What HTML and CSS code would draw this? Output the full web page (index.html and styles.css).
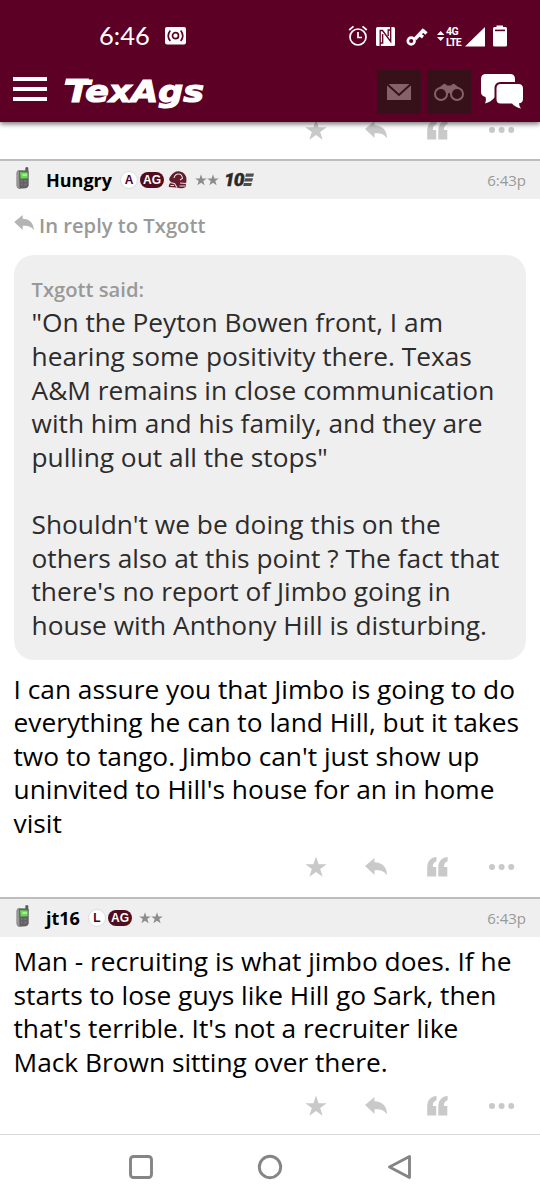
FILE: index.html
```html
<!DOCTYPE html>
<html lang="en">
<head>
<meta charset="utf-8">
<title>TexAgs</title>
<link rel="stylesheet" href="styles.css">
</head>
<body>
<svg class="defs" aria-hidden="true">
  <symbol id="star" viewBox="0 0 22 22"><path d="M11 0.5 13.6 8.2H21.6L15.2 13 17.6 20.7 11 16 4.4 20.7 6.8 13 .4 8.2H8.4Z"/></symbol>
  <symbol id="reply" viewBox="0 0 22 18"><path d="M0 8 9.5 0V4.2C17 4.4 22 9 22 17.2 19 12.8 15.5 12 9.5 12.2V17Z"/></symbol>
  <symbol id="quote" viewBox="0 0 21 20"><path d="M9.5 0V4.3C7.2 4.8 5.9 6.7 5.8 10H9.2V19.5H.2V11C.2 4.4 3.4.5 9.5 0ZM20.6 0V4.3C18.3 4.8 17 6.7 16.9 10H20.3V19.5H11.3V11C11.3 4.4 14.5.5 20.6 0Z"/></symbol>
  <symbol id="more" viewBox="0 0 26 6"><circle cx="3" cy="3" r="3"/><circle cx="12.6" cy="3" r="3"/><circle cx="22.2" cy="3" r="3"/></symbol>
  <symbol id="phone" viewBox="0 0 14 24">
    <path d="M9.3.8Q11-.6 12.3.8V7H9.3Z" fill="#5d5d5d"/>
    <path d="M2.5 3.2 12 3.5Q13 4 12.7 6V18.5Q12.4 20.5 10 21.3L3 21.7Q.7 21.2.6 19V5.5Q.8 3.7 2.5 3.2Z" fill="#626262"/>
    <path d="M.8 6Q1 3.7 3 3.3L3.5 21.5Q1 21 .8 19Z" fill="#969696"/>
    <path d="M4 5.3 11.7 5.5V11.2L4.7 11.5Z" fill="#62df4d"/><path d="M6.5 6.8H11V9H6.5Z" fill="#a3f392"/>
    <path d="M5 13.2H6.5V15H5ZM8.3 13.2H10.5V15H8.3ZM5 16.6H6.5V18.5H5ZM8.3 16.6H10.5V18.5H8.3Z" fill="#777"/>
  </symbol>
</svg>
<header class="top">
  <div class="status">
    <span class="clock">6:46</span>
    <svg class="cast" viewBox="0 0 21 18"><rect width="21" height="17.5" rx="2" fill="#fff"/><g fill="none" stroke="#5c0025" stroke-width="1.7"><circle cx="10.5" cy="8.7" r="3"/><path d="M5.3 3.4Q1.2 8.7 5.3 14M15.7 3.4Q19.8 8.7 15.7 14"/></g></svg>
    <div class="tray">
      <svg width="90" height="24" viewBox="0 0 90 24" fill="#fff">
        <g fill="none" stroke="#fff" stroke-width="1.7"><circle cx="10" cy="13" r="8"/><path d="M10 8V13.5H14M1.2 6 5.5 2.3M18.8 6 14.5 2.3"/></g>
        <rect x="28" y="3" width="19" height="19" rx="1.5"/><path d="M32.2 22V6.500H34.500L42.700 17.500V3M34.700 10V19H32M40.200 12V6H43" fill="none" stroke="#5c0025" stroke-width="1.300"/>
        <path d="M67 15 76 5.5M71.5 10.5 75 13.2M75 6.5 78.5 9.5" fill="none" stroke="#fff" stroke-width="3.4"/><circle cx="63.2" cy="17" r="3.4" fill="none" stroke="#fff" stroke-width="2.6"/>
      </svg>
      <svg class="updown" width="8" height="24" viewBox="0 0 8 24" fill="#fff"><path d="M0 11 3.700 7 7.400 11ZM0 13 3.700 17 7.400 13Z"/></svg>
      <span class="net"><span>4G</span><span>LTE</span></span>
      <svg width="43" height="24" viewBox="117 0 43 24" fill="#fff">
        <path d="M117 22.5H137V3Z"/>
        <path d="M148.500 3V1.500H155V3H157.500Q159 3 159 4.500V21Q159 22.500 157.500 22.500H146.500Q145 22.500 145 21V4.500Q145 3 146.500 3Z"/><path d="M147 6.400H157" stroke="#5c0025" stroke-width="1.600"/>
      </svg>
    </div>
  </div>
  <nav class="bar">
    <div class="burger"><i></i><i></i><i></i></div>
    <svg class="logo" viewBox="0 0 146 38"><text x="2" y="26.500" textLength="138" lengthAdjust="spacingAndGlyphs">TexAgs</text><path d="M2 3.500H25L23.500 10H21.500L20.500 7.500H4.500L2.500 10H0.500Z"/></svg>
    <div class="tile"><svg width="26" height="18" viewBox="0 0 26 18"><path d="M1 1H25V17H1Z" fill="#866168"/><path d="M1 1 13 12 25 1" fill="none" stroke="#371119" stroke-width="2"/></svg></div>
    <div class="tile"><svg width="30" height="20" viewBox="0 0 30 20"><g fill="none" stroke="#866168" stroke-width="2"><circle cx="7" cy="12" r="6"/><circle cx="23" cy="12" r="6"/></g><path d="M2 8 9 2.500Q10.500 1 12 2.500L13 3.500H17L18 2.500Q19.500 1 21 2.500L28 8Q21 3.500 17.500 10L16.500 12Q15 10 13.500 12L12.500 10Q9 3.500 2 8Z" fill="#866168"/></svg></div>
    <svg class="chat" viewBox="0 0 44 36"><path d="M6 1H30Q35 1 35 6V19Q35 24 30 24H15Q11 29 5 30.500Q6.500 27 5.500 24Q1 23 1 19V6Q1 1 6 1Z"/><path d="M20.500 11H38.500Q43 11 43 15.500V26Q43 30 39 30.300Q39 33 41 35.500Q35 34 32 30.500H20.500Q16.500 30.500 16.500 26V15.500Q16.500 11 20.500 11Z" stroke="#5c0025" stroke-width="4" paint-order="stroke"/></svg>
  </nav>
</header>
<main>
  <div class="actions first"><svg class="i-star"><use href="#star"/></svg><svg class="i-reply"><use href="#reply"/></svg><svg class="i-quote"><use href="#quote"/></svg><svg class="i-more"><use href="#more"/></svg></div>
  <article class="post">
    <div class="head">
      <svg class="phone"><use href="#phone"/></svg><b class="user hungry">Hungry</b>
      <span class="letter">A</span><span class="ag">AG</span>
      <svg class="helmet" viewBox="0 0 20 18"><path d="M2 6Q6-.5 12 .5 18.500 2 18.500 9L17.500 16Q15 18 11 17L8 16.500 1 16Q0 14 3 11Q0 9 2 6Z" fill="#641c2c"/><path d="M6 7Q7 3 10.500 3T14.500 7.500L12 9M1.500 11.500 6.500 12.500 9 16.500M12 12 18 12.500M2.500 14.500H6M11.500 15H17" fill="none" stroke="#e7dcdf" stroke-width="1.100"/></svg>
      <span class="stars"><svg><use href="#star"/></svg><svg><use href="#star"/></svg></span>
      <span class="ten">10</span><svg class="lines" viewBox="0 0 11 14"><path d="M3 0.500H11L10.200 3.700H2.200ZM2 5.200H10L9.200 8.400H1.200ZM.9 9.900H8.900L8.100 13.100H.1Z"/></svg>
      <time>6:43p</time>
    </div>
    <div class="inreply"><svg><use href="#reply"/></svg><span>In reply to Txgott</span></div>
    <blockquote>
      <div class="said">Txgott said:</div>
      <p>"On the Peyton Bowen front, I am<br>hearing some positivity there. Texas<br>A&amp;M remains in close communication<br>with him and his family, and they are<br>pulling out all the stops"<br><br>Shouldn't we be doing this on the<br>others also at this point ? The fact that<br>there's no report of Jimbo going in<br>house with Anthony Hill is disturbing.</p>
    </blockquote>
    <p class="text">I can assure you that Jimbo is going to do<br>everything he can to land Hill, but it takes<br>two to tango. Jimbo can't just show up<br>uninvited to Hill's house for an in home<br>visit</p>
    <div class="actions second"><svg class="i-star"><use href="#star"/></svg><svg class="i-reply"><use href="#reply"/></svg><svg class="i-quote"><use href="#quote"/></svg><svg class="i-more"><use href="#more"/></svg></div>
  </article>
  <article class="post">
    <div class="head">
      <svg class="phone"><use href="#phone"/></svg><b class="user jt">jt16</b>
      <span class="letter">L</span><span class="ag">AG</span>
      <span class="stars"><svg><use href="#star"/></svg><svg><use href="#star"/></svg></span>
      <time>6:43p</time>
    </div>
    <p class="text later">Man - recruiting is what jimbo does. If he<br>starts to lose guys like Hill go Sark, then<br>that's terrible. It's not a recruiter like<br>Mack Brown sitting over there.</p>
    <div class="actions third"><svg class="i-star"><use href="#star"/></svg><svg class="i-reply"><use href="#reply"/></svg><svg class="i-quote"><use href="#quote"/></svg><svg class="i-more"><use href="#more"/></svg></div>
  </article>
</main>
<footer>
  <svg viewBox="0 0 26 26"><rect x="2.500" y="2.500" width="21" height="21" rx="3"/></svg>
  <svg viewBox="0 0 26 26"><circle cx="13" cy="13" r="10.700"/></svg>
  <svg viewBox="0 0 26 26"><path d="M3.500 13 23.500 2.500V23.500Z"/></svg>
</footer>
</body>
</html>
```
FILE: styles.css
```css
* { box-sizing: border-box; }
body { margin: 0; width: 540px; height: 1200px; overflow: hidden; background: #fff; font-family: "Open Sans", sans-serif; display: flex; flex-direction: column; }
p, blockquote { margin: 0; }
svg { display: block; flex: none; }
.defs { position: absolute; width: 0; height: 0; }
.top { position: relative; z-index: 1; height: 122px; flex: none; background: #5c0025; box-shadow: 0 2px 5px rgba(0, 0, 0, .55); }
.status { height: 68px; display: flex; align-items: center; padding: 4px 0 0 99px; }
.clock { width: 66px; font: 25.5px/30px Lato, sans-serif; color: #fff; white-space: nowrap; padding-bottom: 2px; height: 32px; }
.cast { width: 21px; height: 18px; }
.tray { width: 160px; height: 24px; margin-left: 162px; display: flex; align-items: center; }
.updown { margin-left: -1px; }
.net { display: flex; flex-direction: column; width: 20px; padding: 2px 0 0 1px; font: bold 10.5px/11px Roboto, sans-serif; color: #fff; letter-spacing: -.6px; }
.bar { height: 54px; display: flex; align-items: flex-start; padding-left: 13px; }
.burger { display: flex; flex-direction: column; gap: 6px; width: 34px; padding-top: 9px; }
.burger i { height: 4px; background: #fff; }
.logo { width: 146px; height: 38px; margin: 7px 0 0 17px; fill: #fff; }
.logo text { font: italic bold 29.5px "DejaVu Sans", sans-serif; stroke: #fff; stroke-width: 1.2px; }
.tile { width: 44px; height: 44px; margin: 2px 6px 0 0; background: #371119; border-radius: 2px; display: flex; align-items: center; justify-content: center; }
.logo + .tile { margin-left: 167px; }
.chat { width: 44px; height: 36px; margin-top: 5px; margin-left: 3px; fill: #fff; }
main { height: 1012px; flex: none; overflow: hidden; }
.actions { display: flex; align-items: center; padding-left: 305px; fill: #c9c9c9; }
.first { height: 37px; padding-bottom: 22px; }
.second { height: 57px; padding-bottom: 4px; }
.third { height: 57px; padding-bottom: 18px; }
.i-star { width: 22px; height: 22px; }
.i-reply { width: 22px; height: 18px; margin-left: 38px; }
.i-quote { width: 21px; height: 20px; margin-left: 40px; }
.i-more { width: 26px; height: 6px; margin-left: 41px; }
.head { height: 40px; border-top: 2px solid #bdbdbd; background: #efefef; display: flex; align-items: center; padding: 0 14px 0 16px; }
.phone { width: 14px; height: 24px; margin: -2px 16px 0 0; }
.user { font-size: 18px; line-height: 25px; font-weight: 700; white-space: nowrap; }
.hungry { width: 74px; }
.jt { width: 42px; }
.letter { width: 18px; height: 18px; border-radius: 50%; border: 1px solid #ddd; background: #fff; color: #500021; font: bold 12px/17px "Liberation Sans", sans-serif; text-align: center; }
.ag { width: 24px; height: 16px; border-radius: 8px; margin-left: 2px; background: #500d20; color: #fff; font: bold 12px/16px "Liberation Sans", sans-serif; text-align: center; }
.helmet { width: 20px; height: 18px; margin-left: 4px; }
.stars { display: flex; margin-left: 7px; fill: #8c8c8c; }
.stars svg { width: 12px; height: 12px; }
.ten { width: 19px; margin-left: 5px; font: italic 900 19px/20px Roboto, sans-serif; letter-spacing: -1px; color: #292929; -webkit-text-stroke: .4px #292929; }
.lines { width: 11px; height: 14px; fill: #505050; }
time { margin-left: auto; font-size: 15px; color: #999; padding-bottom: 1px; }
.inreply { height: 56px; display: flex; align-items: center; padding: 0 0 4px 14px; font-size: 20.2px; font-weight: 600; color: #999; }
.inreply svg { width: 20px; height: 16px; margin: -4px 5px 0 0; fill: #b4b4b4; }
blockquote { margin: 0 14px; height: 405px; border-radius: 20px; background: #efefef; padding: 19px 18px 0 17.5px; color: #2c2c2c; }
.said { height: 32.4px; font-size: 20.2px; line-height: 31px; font-weight: 600; color: #999; }
blockquote p, .text { font-size: 26.3px; line-height: 33.6px; white-space: nowrap; }
.text { padding: 12.6px 13.5px 0; height: 180px; color: #000; }
.later { padding-top: 8px; height: 149px; }
footer { height: 66px; flex: none; border-top: 1px solid #d8d8d8; display: flex; justify-content: center; align-items: center; gap: 103px; padding-bottom: 1px; }
footer svg { width: 26px; height: 26px; fill: none; stroke: #858585; stroke-width: 2.9; stroke-linejoin: round; }
```
